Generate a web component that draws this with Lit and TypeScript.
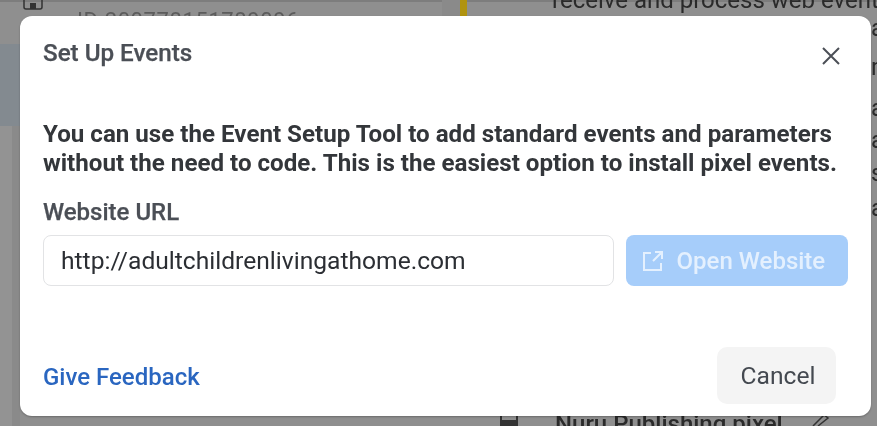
import { LitElement, html, css } from "lit";
import { customElement } from "lit/decorators.js";

@customElement("app-root")
export class AppRoot extends LitElement {
  static styles = css`
    :host {
      display: block;
      position: relative;
      width: 877px;
      height: 426px;
      overflow: hidden;
      background: #8f8f8f;
      font-family: Roboto, "Liberation Sans", sans-serif;
      color: #444950;
    }
    .stage { position: absolute; inset: 0; filter: blur(0.45px); }
    .scrim { position: absolute; inset: 0; overflow: hidden; }
    .band { position: absolute; }
    .band-top { left: 0; top: 0; width: 877px; height: 2px; background: #7d7d7d; }
    .band-left { left: 0; top: 44px; width: 20px; height: 82px; background: #838a90; }
    .band-left2 { left: 12px; top: 126px; width: 8px; height: 300px; background: #8a8a8a; }
    .band-side { left: 0; top: 126px; width: 12px; height: 300px; background: #939393; }
    .band-divider { left: 442px; top: 0; width: 22px; height: 16px; background: #8a8a8a; }
    .accent { position: absolute; left: 460px; top: 0; width: 7px; height: 17px; background: #b0930f; }
    .scrap { position: absolute; white-space: nowrap; color: #2a2a2a; font-size: 24px; line-height: 28px; }
    .scrap-id { left: 77px; top: 7px; color: #5c5c5c; font-size: 22px; letter-spacing: 0.6px; }
    .scrap-rec { left: 552px; top: -14px; }
    .scrap-pixel { left: 555px; top: 410px; font-weight: 500; }
    .letter { position: absolute; left: 871px; color: #2a2a2a; font-size: 24px; line-height: 28px; }
    .pix-ico { position: absolute; color: #333; }
    .ico-top { left: 23px; top: -7px; }
    .ico-bot { left: 498px; top: 412px; }
    .ico-pen { left: 810px; top: 412px; }

    .modal {
      position: absolute;
      left: 20px;
      top: 16px;
      width: 851px;
      height: 400px;
      box-sizing: border-box;
      background: #fff;
      border-radius: 12px;
      box-shadow: 0 1px 2px rgba(0, 0, 0, 0.25);
      display: flex;
      flex-direction: column;
      padding: 22px 23px 0;
    }
    .head {
      display: flex;
      justify-content: space-between;
      align-items: flex-start;
      height: 82px;
    }
    h1 {
      margin: 0;
      font-size: 24.2px;
      line-height: 30px;
      font-weight: 500;
      color: #4b4f56;
      -webkit-text-stroke: 0.25px #4b4f56;
    }
    .close { margin: 8px 7px 0 0; width: 20px; height: 20px; color: #4b4f56; display: block; }
    .lead {
      margin: 0;
      font-size: 24.15px;
      line-height: 29px;
      font-weight: 700;
      color: #33363a;
      white-space: nowrap;
    }
    .label {
      margin-top: 20px;
      font-size: 24px;
      line-height: 28px;
      font-weight: 500;
      color: #4b4f56;
      -webkit-text-stroke: 0.25px #4b4f56;
    }
    .row { display: flex; gap: 12px; margin-top: 9px; }
    .url {
      width: 572px;
      height: 51px;
      box-sizing: border-box;
      border: 1px solid #e2e3e5;
      border-radius: 8px;
      padding: 0 17px;
      display: flex;
      align-items: center;
      font-size: 24.6px;
      color: #2b2e33;
    }
    .open {
      width: 223px;
      height: 51px;
      box-sizing: border-box;
      background: #a6cdfa;
      border-radius: 8px;
      color: #e4f0fe;
      display: flex;
      align-items: center;
      gap: 13px;
      padding-left: 16px;
      font-size: 24px;
      font-weight: 500;
    }
    .open svg { width: 22px; height: 22px; display: block; flex: none; }
    .foot {
      margin-top: auto;
      height: 69px;
      display: flex;
      justify-content: space-between;
      align-items: flex-start;
    }
    .feedback {
      margin-top: 15px;
      font-size: 24px;
      line-height: 30px;
      font-weight: 500;
      color: #2a66c0;
    }
    .cancel {
      width: 119px;
      height: 57px;
      margin-right: 12px;
      padding-left: 3px;
      box-sizing: border-box;
      border-radius: 10px;
      background: #f4f4f4;
      display: flex;
      align-items: center;
      justify-content: center;
      font-size: 24.6px;
      color: #444950;
    }
  `;

  render() {
    const letters = [
      ["a", 14],
      ["r", 53],
      ["a", 94],
      ["a", 126],
      ["s", 159],
      ["a", 194],
    ] as const;
    return html`
      <div class="stage">
        <div class="scrim">
          <div class="band band-top"></div>
          <div class="band band-left"></div>
          <div class="band band-side"></div>
          <div class="band band-left2"></div>
          <div class="band band-divider"></div>
          <div class="accent"></div>
          <svg class="pix-ico ico-top" width="20" height="17" viewBox="0 0 20 17" fill="none" stroke="#333" stroke-width="1.5">
            <rect x="1" y="0" width="18" height="16" rx="2"></rect>
            <rect x="7" y="10" width="6" height="6" fill="#333" stroke="none"></rect>
          </svg>
          <span class="scrap scrap-id">ID 200778151789096</span>
          <span class="scrap scrap-rec">receive and process web event</span>
          <svg class="pix-ico ico-bot" width="22" height="14" viewBox="0 0 22 14" fill="none" stroke="#333" stroke-width="2">
            <path d="M3 0v9M19 0v9"></path>
            <rect x="2" y="8" width="18" height="6" fill="#333" stroke="none"></rect>
          </svg>
          <span class="scrap scrap-pixel">Nuru Publishing pixel</span>
          <svg class="pix-ico ico-pen" width="20" height="14" viewBox="0 0 20 14" fill="none" stroke="#333" stroke-width="1.5">
            <path d="M3 14L14 3l4 3L8 14"></path>
          </svg>
          ${letters.map(
            ([ch, top]) => html`<span class="letter" style="top:${top}px">${ch}</span>`
          )}
        </div>
        <section class="modal">
          <div class="head">
            <h1>Set Up Events</h1>
            <svg class="close" viewBox="0 0 20 20" fill="none" stroke="currentColor" stroke-width="2">
              <path d="M2 2l16 16M18 2L2 18"></path>
            </svg>
          </div>
          <p class="lead">You can use the Event Setup Tool to add standard events and parameters<br />without the need to code. This is the easiest option to install pixel events.</p>
          <div class="label">Website URL</div>
          <div class="row">
            <div class="url">http://adultchildrenlivingathome.com</div>
            <div class="open">
              <svg viewBox="0 0 22 22" fill="none" stroke="currentColor" stroke-width="2">
                <path d="M9 3H2v17h17v-7M13 2h7v7M20 2l-9 9"></path>
              </svg>
              Open Website
            </div>
          </div>
          <div class="foot">
            <div class="feedback">Give Feedback</div>
            <div class="cancel">Cancel</div>
          </div>
        </section>
      </div>
    `;
  }
}
